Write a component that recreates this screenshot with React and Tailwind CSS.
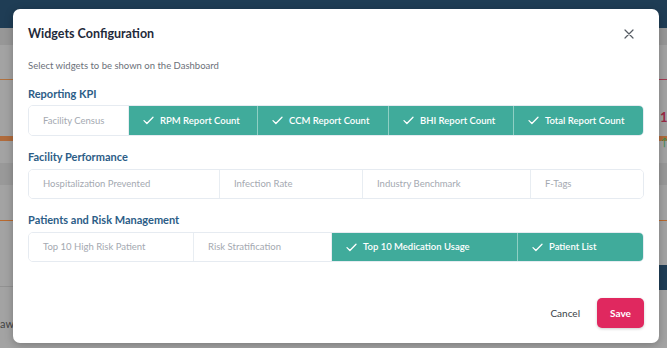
import React from "react";

const Check = () => (
  <svg width="11" height="9" viewBox="0 0 11 9" fill="none" className="shrink-0">
    <path d="M1 4.6 L3.9 7.5 L10 1.2" stroke="white" strokeWidth="1.3" strokeLinecap="round" strokeLinejoin="round" />
  </svg>
);

function Segment({ label, checked, w, last }) {
  return (
    <div
      className={
        "flex h-full items-center gap-[6px] pl-[14px] " +
        w +
        " " +
        (last ? "" : checked ? "border-r border-[#8fcfc4] " : "border-r border-[#e8edf2] ") +
        (checked ? "bg-[#40ab9b] text-white font-semibold" : "bg-white text-[#a4a9b1]")
      }
    >
      {checked && <Check />}
      <span className="text-[9.5px] leading-none whitespace-nowrap">{label}</span>
    </div>
  );
}

function Row({ items, h }) {
  return (
    <div className={"flex w-[616px] overflow-hidden rounded-[5px] border border-[#e6ebf1] " + h}>
      {items.map((it, i) => (
        <Segment key={i} {...it} last={i === items.length - 1} />
      ))}
    </div>
  );
}

export default function App() {
  return (
    <div
      className="relative h-[348px] w-[667px] overflow-hidden bg-[#a3a3a3]"
      style={{ fontFamily: "Lato, 'Noto Sans', sans-serif" }}
    >
      {/* dimmed dashboard background */}
      <div className="flex h-full flex-col">
        <div className="h-[28px] bg-[#1f3d55]" />
        <div className="h-[17px] bg-[#979797]" />
        <div className="h-[34px]" />
        <div className="h-[1px] bg-[#b0713f]" />
        <div className="h-[56px]" />
        <div className="h-[5px] bg-[#b06b3c]" />
        <div className="h-[22px]" />
        <div className="h-[22px] bg-[#999999]" />
        <div className="h-[35px]" />
        <div className="h-[1px] bg-[#b8692f]" />
        <div className="h-[44px]" />
        <div className="h-[22px] bg-[#a3a3a3] border-b border-[#929292]" />
        <div className="flex-1" />
      </div>
      <div className="absolute left-0 top-[316px] text-[11px] text-[#444]">aw</div>
      <div className="absolute right-0 top-[79px] h-[1px] w-[8px] bg-[#a33a52]" />
      <div className="absolute right-0 top-[265px] h-[25px] w-[8px] bg-[#1f3d55]" />
      <div className="absolute left-[660px] top-[108px] text-[13px] font-bold text-[#9a2a45]">1</div>
      <div className="absolute left-[660px] top-[134px] text-[11px] text-[#3f8a4e]">↑</div>

      {/* modal */}
      <div className="absolute left-[13px] top-[9px] flex h-[334px] w-[646px] flex-col rounded-[7px] bg-white px-[15px] shadow-[0_2px_8px_rgba(0,0,0,0.25)]">
        <div className="mt-[16px] flex items-center justify-between">
          <h2 className="text-[12.5px] font-bold leading-[18px] text-[#1f2a3a]">Widgets Configuration</h2>
          <svg width="10" height="10" viewBox="0 0 10 10" className="mr-[10px]">
            <path d="M1 1 L9 9 M9 1 L1 9" stroke="#555b63" strokeWidth="1.2" strokeLinecap="round" />
          </svg>
        </div>
        <p className="mt-[16px] text-[9.5px] leading-[14px] text-[#6b7079]">Select widgets to be shown on the Dashboard</p>

        <h3 className="mt-[13px] text-[11px] font-bold leading-[16px] text-[#2c5d87]">Reporting KPI</h3>
        <div className="mt-[3px]">
          <Row
            h="h-[31px]"
            items={[
              { label: "Facility Census", w: "w-[100px]" },
              { label: "RPM Report Count", w: "w-[129px]", checked: true },
              { label: "CCM Report Count", w: "w-[131px]", checked: true },
              { label: "BHI Report Count", w: "w-[125px]", checked: true },
              { label: "Total Report Count", w: "flex-1", checked: true },
            ]}
          />
        </div>

        <h3 className="mt-[13px] text-[11px] font-bold leading-[16px] text-[#2c5d87]">Facility Performance</h3>
        <div className="mt-[4px]">
          <Row
            h="h-[30px]"
            items={[
              { label: "Hospitalization Prevented", w: "w-[191px]" },
              { label: "Infection Rate", w: "w-[143px]" },
              { label: "Industry Benchmark", w: "w-[168px]" },
              { label: "F-Tags", w: "flex-1" },
            ]}
          />
        </div>

        <h3 className="mt-[13px] text-[11px] font-bold leading-[16px] text-[#2c5d87]">Patients and Risk Management</h3>
        <div className="mt-[4px]">
          <Row
            h="h-[30px]"
            items={[
              { label: "Top 10 High Risk Patient", w: "w-[165px]" },
              { label: "Risk Stratification", w: "w-[138px]" },
              { label: "Top 10 Medication Usage", w: "w-[186px]", checked: true },
              { label: "Patient List", w: "flex-1", checked: true },
            ]}
          />
        </div>

        <div className="mt-[36px] flex items-center justify-end">
          <button className="mr-[17px] text-[10px] text-[#3a3f47]">Cancel</button>
          <button className="h-[30px] w-[47px] rounded-[5px] bg-[#e0285f] text-[10px] font-bold text-white shadow-[0_1px_3px_rgba(0,0,0,0.2)]">
            Save
          </button>
        </div>
      </div>
    </div>
  );
}
